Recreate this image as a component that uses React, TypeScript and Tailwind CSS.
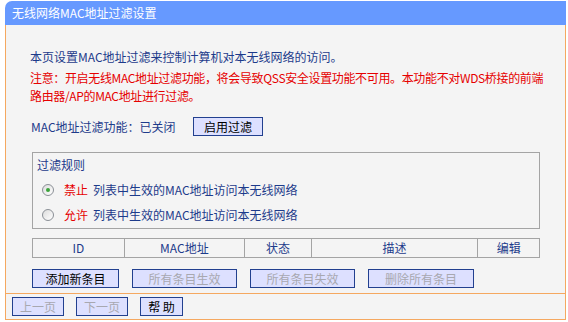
import React from 'react'

const font = { fontFamily: '"Noto Sans CJK SC", "Liberation Sans", sans-serif' }

function Btn({ label, disabled, w }: { label: string; disabled?: boolean; w: string }) {
  return (
    <button
      className={`${w} h-[19px] bg-[#dde0ff] border border-[#22408f] text-[12px] leading-[17px] text-center ${disabled ? 'text-[#a8a8b0]' : 'text-black'}`}
    >
      {label}
    </button>
  )
}

function Radio({ checked }: { checked?: boolean }) {
  return (
    <span className="w-[12px] h-[12px] rounded-full border border-[#8a8f96] bg-gradient-to-br from-[#dcdcdc] to-white flex items-center justify-center">
      {checked && <span className="w-[4px] h-[4px] rounded-full bg-[#3aa33a]" />}
    </span>
  )
}

export default function App() {
  const cols = [
    { label: 'ID', w: 'w-[91px]' },
    { label: 'MAC地址', w: 'w-[121px]' },
    { label: '状态', w: 'w-[67px]' },
    { label: '描述', w: 'w-[167px]' },
    { label: '编辑', w: 'w-[62px]' },
  ]

  return (
    <div className="w-[568px] h-[322px] bg-white pt-[1px] pl-[5px]" style={font}>
      <div className="w-[561px]">
        {/* Title bar */}
        <div className="h-[24px] bg-[#6699ff] rounded-tl-[7px] pl-[7px] text-white text-[12px] leading-[24px]">
          无线网络MAC地址过滤设置
        </div>

        {/* Body */}
        <div className="h-[268px] bg-[#f4f4f4] border-l border-r border-[#f5a860] pl-[24px] pt-[23px] text-[12px] text-[#1d3b8b]">
          <div className="h-[18px] leading-[18px] whitespace-nowrap">本页设置MAC地址过滤来控制计算机对本无线网络的访问。</div>
          <div className="mt-[3px] leading-[18px] text-[#e60000] whitespace-nowrap tracking-[-0.35px]">
            注意：开启无线MAC地址过滤功能，将会导致QSS安全设置功能不可用。本功能不对WDS桥接的前端
            <br />
            路由器/AP的MAC地址进行过滤。
          </div>

          <div className="mt-[12px] h-[19px] flex items-center">
            <span className="w-[163px] pl-[1px] whitespace-nowrap">MAC地址过滤功能：已关闭</span>
            <Btn label="启用过滤" w="w-[70px]" />
          </div>

          <div className="mt-[16px] ml-[2px] w-[508px] h-[77px] border border-[#a4a4a4]">
            <div className="h-[24px] leading-[24px] pl-[4px]">过滤规则</div>
            <div className="h-[25px] flex items-center pl-[9px]">
              <Radio checked />
              <span className="ml-[10px] text-[#e60000]">禁止</span>
              <span className="ml-[5px]">列表中生效的MAC地址访问本无线网络</span>
            </div>
            <div className="h-[25px] flex items-center pl-[9px]">
              <Radio />
              <span className="ml-[10px] text-[#e60000]">允许</span>
              <span className="ml-[5px]">列表中生效的MAC地址访问本无线网络</span>
            </div>
          </div>

          <div className="mt-[9px] ml-[2px] w-[508px] h-[20px] flex border border-[#a4a4a4]">
            {cols.map((c, i) => (
              <div
                key={c.label}
                className={`${c.w} h-full leading-[18px] text-center ${i > 0 ? 'border-l border-[#a4a4a4]' : ''}`}
              >
                {c.label}
              </div>
            ))}
          </div>

          <div className="mt-[11px] ml-[2px] flex gap-[13px]">
            <Btn label="添加新条目" w="w-[87px]" />
            <Btn label="所有条目生效" disabled w="w-[105px]" />
            <Btn label="所有条目失效" disabled w="w-[105px]" />
            <Btn label="删除所有条目" disabled w="w-[106px]" />
          </div>
        </div>

        {/* Footer */}
        <div className="h-[27px] bg-[#f4f4f4] border border-[#f5a860] pl-[6px] pt-[3px] flex gap-[12px]">
          <Btn label="上一页" disabled w="w-[52px]" />
          <Btn label="下一页" disabled w="w-[52px]" />
          <Btn label="帮 助" w="w-[43px]" />
        </div>
      </div>
    </div>
  )
}
